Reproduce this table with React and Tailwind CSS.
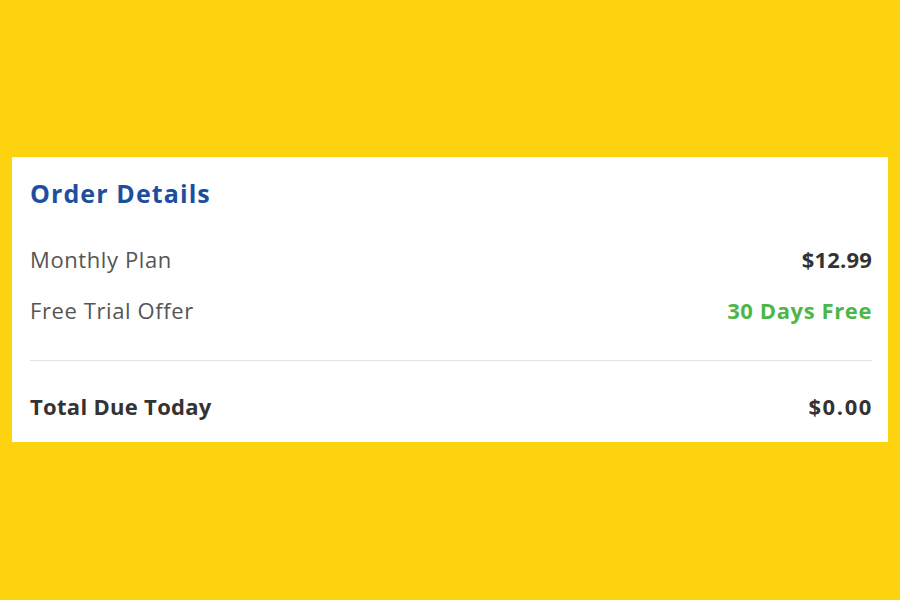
export default function App() {
  return (
    <div className="w-[900px] h-[600px] bg-[#fdd30f] flex flex-col pt-[157px] px-[12px]" style={{ fontFamily: '"Open Sans", Lato, sans-serif' }}>
      <div className="bg-white h-[285px] w-[876px] pl-[18px] pr-[16px]">
        <div className="h-[72px] flex items-center pt-[1px]">
          <h2 className="text-[25px] font-bold text-[#1d4f9f] tracking-[1.1px]">Order Details</h2>
        </div>
        <div className="h-[5px]" />
        <div className="flex justify-between items-center h-[51px] text-[22px]">
          <span className="text-[#555] tracking-[0.6px]">Monthly Plan</span>
          <span className="font-bold text-[#333] tracking-[0.2px]">$12.99</span>
        </div>
        <div className="flex justify-between items-center h-[51px] text-[22px]">
          <span className="text-[#555] tracking-[0.6px]">Free Trial Offer</span>
          <span className="font-bold text-[#4cb748] tracking-[0.6px]">30 Days Free</span>
        </div>
        <div className="h-[24px]" />
        <div className="border-t border-[#e3e3e3]" />
        <div className="flex justify-between items-center h-[94px] -mt-[2px] text-[22px] font-bold text-[#333] tracking-[0.3px]">
          <span>Total Due Today</span>
          <span className="tracking-[1.6px] -mr-[1px]">$0.00</span>
        </div>
      </div>
    </div>
  );
}
